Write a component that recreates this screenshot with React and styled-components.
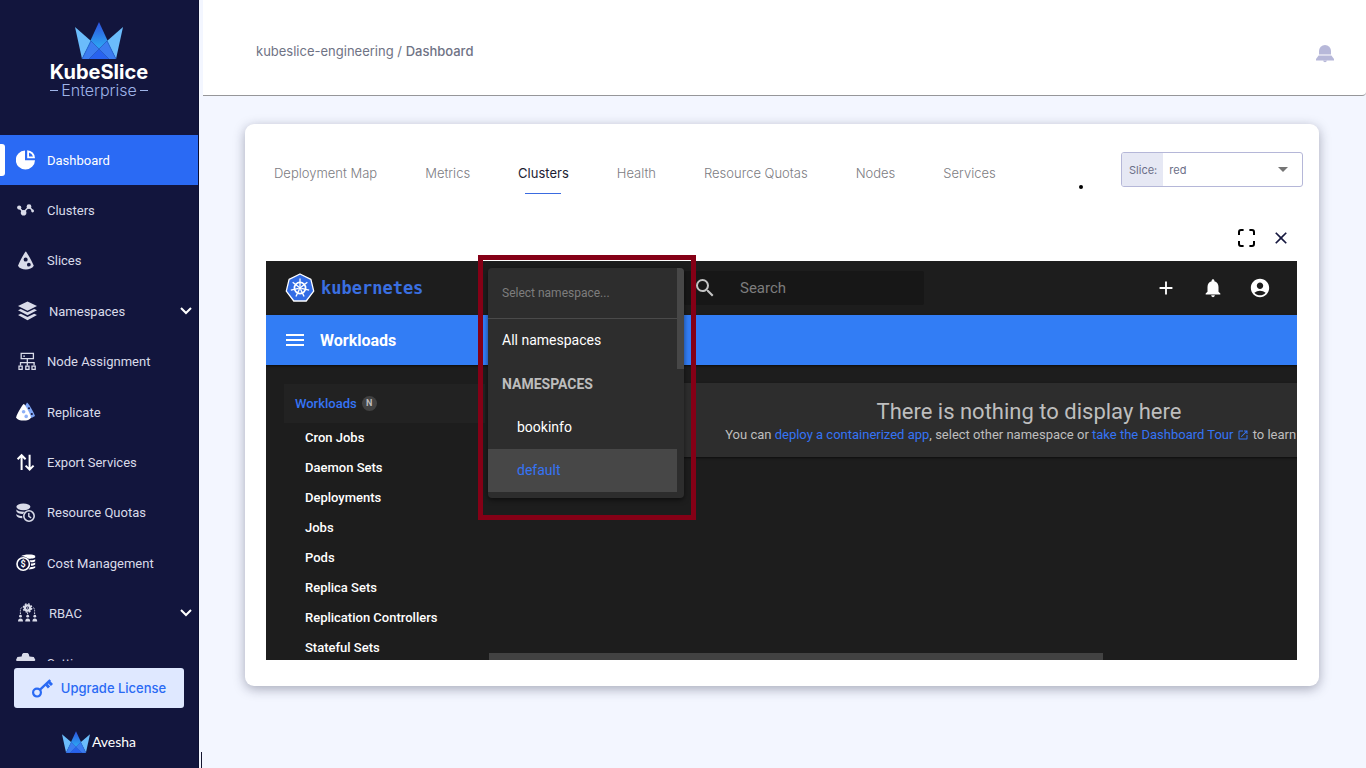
import { useState } from "react";
import styled, { createGlobalStyle } from "styled-components";
import {
    MdAccountCircle,
    MdAdd,
    MdClose,
    MdMenu,
    MdNotifications,
    MdOpenInNew,
    MdSearch,
} from "react-icons/md";

const GlobalStyle = createGlobalStyle`
    * {
        box-sizing: border-box;
    }

    :root {
        --navy: #12153d;
        --blue: #2a6af4;
        --page: #f3f6ff;
        --k8s-bg: #1d1d1d;
        --k8s-card: #2d2d2d;
        --k8s-blue: #327df5;
        --k8s-link: #3574f5;
    }

    body {
        margin: 0;
        background: var(--page);
        font-family: Inter, "Liberation Sans", sans-serif;
        font-size: 13px;
    }

    button, input, select {
        font: inherit;
        color: inherit;
        border: 0;
        padding: 0;
        margin: 0;
        background: none;
        outline: none;
    }

    button {
        cursor: pointer;
    }

    a {
        text-decoration: none;
    }

    ul {
        list-style: none;
        margin: 0;
        padding: 0;
    }

    svg {
        display: block;
        flex: none;
    }
`;

const Shell = styled.div`
    display: flex;
    height: 100vh;
    min-height: 600px;
`;

/* ---------- Sidebar ---------- */

const Sidebar = styled.aside`
    position: relative;
    flex: 0 0 199px;
    display: flex;
    flex-direction: column;
    margin-right: 3px;
    background: var(--navy);
    border-right: 1px solid #0c0f30;

    &::after {
        content: "";
        position: absolute;
        right: -4px;
        bottom: 0;
        width: 1px;
        height: 16px;
        background: #14162f;
    }
`;

const Brand = styled.div`
    display: flex;
    flex-direction: column;
    align-items: center;
    height: 135px;
    flex: none;
    padding-top: 22px;
`;

const BrandName = styled.div`
    margin-top: 3px;
    font-size: 20px;
    font-weight: 700;
    line-height: 20px;
    color: #fff;
`;

const BrandEdition = styled.div`
    display: flex;
    align-items: center;
    gap: 3px;
    font-size: 16px;
    font-weight: 300;
    line-height: 16px;
    color: #9fb4e8;

    &::before,
    &::after {
        content: "";
        width: 8px;
        height: 1px;
        background: #9fb4e8;
    }
`;

const Nav = styled.nav`
    flex: 1;
    min-height: 0;
    overflow: hidden;
    display: flex;
    flex-direction: column;
    gap: 1px;
    font-family: Roboto, sans-serif;
`;

const NavLink = styled.a`
    position: relative;
    display: flex;
    align-items: center;
    gap: 11px;
    height: 50px;
    padding: 0 6px 0 ${({ $expandable }) => ($expandable ? "18px" : "16px")};
    color: ${({ $active }) => ($active ? "#fff" : "#d9dbe9")};
    background: ${({ $active }) => ($active ? "var(--blue)" : "transparent")};

    &::before {
        content: "";
        display: ${({ $active }) => ($active ? "block" : "none")};
        position: absolute;
        left: 0;
        top: 9px;
        bottom: 9px;
        width: 5px;
        border-radius: 0 3px 3px 0;
        background: #fff;
    }
`;

const NavLabel = styled.span`
    flex: 1;
    padding-top: 1px;
`;

const SidebarFooter = styled.div`
    flex: none;
    display: flex;
    flex-direction: column;
    align-items: center;
    padding: 7px 14px 15px;
    gap: 23px;
`;

const UpgradeButton = styled.button`
    display: flex;
    align-items: center;
    justify-content: center;
    gap: 8px;
    width: 100%;
    height: 40px;
    border-radius: 3px;
    background: #dfe8ff;
    color: var(--blue);
    font-weight: 500;
`;

const Avesha = styled.div`
    display: flex;
    align-items: center;
    gap: 2px;
    color: #fff;
    font-family: Lato, sans-serif;
    font-size: 14px;
    line-height: 22px;
`;

/* ---------- Page ---------- */

const Page = styled.div`
    flex: 1;
    min-width: 0;
`;

const Header = styled.header`
    display: flex;
    justify-content: space-between;
    height: 96px;
    margin-left: 1px;
    padding: 41px 32px 0 53px;
    background: #fff;
    border-bottom: 1px solid #969699;
    border-radius: 0 0 4px 0;
`;

const Breadcrumb = styled.div`
    line-height: 20px;
    color: #6f7385;

    a {
        color: inherit;
    }

    strong {
        font-weight: 500;
    }
`;

const BellButton = styled.button`
    align-self: flex-start;
    margin-top: 4px;
`;

const Main = styled.main`
    padding: 28px 47px 0 43px;
`;

const Card = styled.section`
    padding: 28px 16px 26px 21px;
    border-radius: 9px;
    background: #fff;
    box-shadow: 0 3px 12px rgba(30, 34, 60, 0.36);
`;

const CardTop = styled.div`
    display: flex;
    justify-content: space-between;
    align-items: flex-start;
`;

const Tabs = styled.div`
    display: flex;
    gap: 48px;
    padding-left: 8px;
`;

const Tab = styled.button`
    display: flex;
    flex-direction: column;
    align-items: center;
    padding-top: 11px;
    line-height: 20px;
    font-weight: ${({ $active }) => ($active ? 400 : 300)};
    color: ${({ $active }) => ($active ? "#1c1d33" : "#7c7c82")};
    white-space: nowrap;

    &::after {
        content: "";
        width: 36px;
        height: 1px;
        margin-top: 10px;
        background: ${({ $active }) => ($active ? "#3a6be0" : "transparent")};
    }
`;

const Filter = styled.div`
    display: flex;
    align-items: flex-start;
    gap: 38px;
`;

const Dot = styled.span`
    width: 4px;
    height: 4px;
    margin-top: 33px;
    border-radius: 2px;
    background: #000;
`;

const SliceField = styled.label`
    position: relative;
    display: flex;
    align-items: center;
    width: 182px;
    height: 35px;
    border: 1px solid #b5b7d8;
    border-radius: 3px;
    overflow: hidden;
    font-size: 11px;
    color: #6c6f88;

    span {
        display: flex;
        align-items: center;
        align-self: stretch;
        padding: 0 6px 0 7px;
        background: #e6e8f4;
    }

    select {
        flex: 1;
        align-self: stretch;
        padding-left: 6px;
        appearance: none;
    }

    svg {
        position: absolute;
        right: 14px;
        top: 14px;
        pointer-events: none;
    }
`;

const CardTools = styled.div`
    display: flex;
    justify-content: flex-end;
    gap: 11px;
    margin: 32px 10px 11px 0;

    button {
        display: flex;
        align-items: center;
        justify-content: center;
        width: 24px;
        height: 24px;
        color: #16183f;
    }
`;

/* ---------- Kubernetes panel ---------- */

const PanelWrap = styled.div`
    position: relative;
    margin-right: 6px;
    font-family: Roboto, sans-serif;
`;

const Panel = styled.div`
    height: 399px;
    overflow: hidden;
    background: var(--k8s-bg);
    color: #fff;
    display: flex;
    flex-direction: column;
`;

const TopBar = styled.div`
    display: flex;
    align-items: center;
    flex: 0 0 54px;
    padding-right: 26px;
`;

const K8sBrand = styled.div`
    display: flex;
    align-items: center;
    gap: 6px;
    flex: 0 0 418px;
    padding-left: 19px;
    color: #3a6fe0;
    font-family: "DejaVu Sans Mono", monospace;
    font-size: 17px;
    font-weight: 700;
`;

const SearchBox = styled.label`
    display: flex;
    align-items: center;
    gap: 23px;
    flex: 0 1 240px;
    min-width: 0;
    height: 34px;
    padding-left: 9px;
    border-radius: 2px;
    background: #171717;
    color: #c4c4c4;

    input {
        min-width: 0;
        flex: 1;
        font-size: 15px;
    }

    input::placeholder {
        color: #7d7d7d;
        opacity: 1;
    }
`;

const TopActions = styled.div`
    display: flex;
    gap: 25px;
    margin-left: auto;
`;

const ActionBar = styled.div`
    display: flex;
    align-items: center;
    gap: 13px;
    flex: 0 0 50px;
    padding-left: 17px;
    background: var(--k8s-blue);
    box-shadow: 0 1px 2px rgba(0, 0, 0, 0.6);
    font-size: 16px;
    font-weight: 700;
`;

const PanelBody = styled.div`
    display: flex;
    flex: 1;
    min-height: 0;
`;

const SideNav = styled.nav`
    flex: 0 0 223px;
    padding: 19px 4px 0 18px;
    overflow: hidden;
    font-weight: 500;
`;

const SideTitle = styled.a`
    display: flex;
    align-items: center;
    gap: 5px;
    height: 39px;
    padding-left: 11px;
    background: #222;
    color: var(--k8s-link);

    span {
        width: 15px;
        height: 15px;
        border-radius: 50%;
        background: #424242;
        color: #bdbdbd;
        font-size: 9px;
        font-weight: 700;
        line-height: 15px;
        text-align: center;
    }
`;

const SideItem = styled.a`
    display: block;
    padding-left: 21px;
    color: #fff;
    line-height: 30px;
`;

const Content = styled.div`
    position: relative;
    flex: 1;
    min-width: 0;
    overflow: hidden;
    padding: 18px 0 0 18px;
`;

const EmptyCard = styled.div`
    width: 1044px;
    height: 74px;
    padding-top: 15px;
    background: var(--k8s-card);
    box-shadow: 0 1px 2px rgba(0, 0, 0, 0.6);
    color: #bebebe;
    text-align: center;
    line-height: 18px;

    h2 {
        margin: 0;
        font-size: 22px;
        font-weight: 400;
        line-height: 28px;
    }

    p {
        margin: 0;
    }

    a {
        color: var(--k8s-link);
    }

    svg {
        display: inline-block;
        vertical-align: -2px;
        margin-left: 4px;
    }
`;

const HorizontalThumb = styled.div`
    position: absolute;
    left: 0;
    bottom: 0;
    width: 76%;
    height: 7px;
    background: #424242;
`;

const Highlight = styled.div`
    position: absolute;
    left: 212px;
    top: -6px;
    width: 218px;
    height: 265px;
    padding: 8px 7px 0 5px;
    border: 5px solid #850016;
`;

const Dropdown = styled.div`
    position: relative;
    height: 230px;
    padding-right: 7px;
    border-radius: 4px;
    overflow: hidden;
    background: var(--k8s-card);
    box-shadow: 0 2px 5px rgba(0, 0, 0, 0.5);
    color: #fff;
    font-size: 14px;

    &::after {
        content: "";
        position: absolute;
        top: 0;
        right: 0;
        width: 7px;
        height: 101px;
        background: #474747;
    }
`;

const NamespaceSearch = styled.input`
    display: block;
    width: 100%;
    height: 51px;
    padding: 0 14px;
    border-bottom: 1px solid #4a4a4a;
    font-size: 12px;

    &::placeholder {
        color: #7d7d7d;
        opacity: 1;
    }
`;

const Option = styled.button`
    display: flex;
    align-items: center;
    width: 100%;
    height: 43px;
    padding: 0 0 2px ${({ $inner }) => ($inner ? "29px" : "14px")};
    background: ${({ $selected }) => ($selected ? "#474747" : "transparent")};
    color: ${({ $selected }) => ($selected ? "var(--k8s-link)" : "#fff")};
`;

const OptionGroup = styled.div`
    margin-top: 1px;
    padding-left: 14px;
    color: #bdbdbd;
    font-weight: 700;
    line-height: 43px;
`;

/* ---------- Drawings ---------- */

const Crown = ({ id, width, height }) => (
    <svg width={width} height={height} viewBox="0 0 48 37" aria-hidden="true">
        <defs>
            <linearGradient id={id} x1="0" y1="0" x2="0" y2="1">
                <stop offset="0" stopColor="#2c50dd" />
                <stop offset="0.65" stopColor="#2da2f2" />
                <stop offset="1" stopColor="#2f6cf2" />
            </linearGradient>
        </defs>
        <path d="M0 5 16 19 7 37Z" fill="#6bbcfb" />
        <path d="M48 5 32 19 41 37Z" fill="#6bbcfb" />
        <path d="M24 0 41 37H7Z" fill={`url(#${id})`} />
        <path d="M16 19 24 27 14 37H7ZM32 19 24 27 34 37H41Z" fill="#3b7cf0" />
        <path d="M24 27 34 37H14Z" fill="#2862ee" />
        <path d="M16 19 34 37M32 19 14 37M16 19 7 37M32 19 41 37" stroke="#2450b5" strokeWidth="0.6" fill="none" />
    </svg>
);

const Icon = ({ children }) => (
    <svg width="20" height="20" viewBox="0 0 20 20" fill="#d9dbe9" aria-hidden="true">
        {children}
    </svg>
);

const DashboardIcon = () => (
    <Icon>
        <path d="M9 0.4V10.2H19A9.6 9.6 0 1 1 9 0.4Z" fill="#fff" />
        <path d="M11.2 0.2A8 8 0 0 1 19 8.2H11.2ZM13 2.4V6.4H17A6 6 0 0 0 13 2.4Z" fill="#fff" fillRule="evenodd" />
    </Icon>
);

const ClustersIcon = () => (
    <Icon>
        <path d="M3 7.5 7.5 12.5 13 6.5 16.5 10.5" fill="none" stroke="#d9dbe9" strokeWidth="1.5" />
        <circle cx="3.2" cy="7.6" r="2.1" />
        <circle cx="7.6" cy="12.8" r="2.8" />
        <circle cx="13" cy="6.7" r="2.4" />
        <circle cx="16.6" cy="11" r="1.4" />
    </Icon>
);

const SlicesIcon = () => (
    <Icon>
        <path
            d="M9.8 1.6C10.4 1.6 15.4 10 17.8 15.8 16.4 18.4 13 19.4 9.8 19.4S3.2 18.4 2 15.8C4.2 10 9.2 1.6 9.8 1.6ZM9.6 7.6A2 2 0 1 0 9.7 11.6 2 2 0 0 0 9.6 7.6ZM12.8 12.8A1.9 1.9 0 1 0 12.9 16.6 1.9 1.9 0 0 0 12.8 12.8Z"
            fillRule="evenodd"
        />
    </Icon>
);

const LayersIcon = () => (
    <Icon>
        <path d="M9.5 0.5 19 5 9.5 9.8 0 5Z" />
        <path d="M0 9.2 2.8 7.9 9.5 11.3 16.2 7.9 19 9.2 9.5 14.2ZM0 14 2.8 12.7 9.5 16.1 16.2 12.7 19 14 9.5 19.2Z" />
    </Icon>
);

const NodeIcon = () => (
    <Icon>
        <g fill="none" stroke="#d9dbe9" strokeWidth="1.3">
            <path d="M5.2 2.4H17.4V7.6H5.2ZM11.3 7.6V14.6M4.5 14.6V11.6H18.1V14.6" />
            <path d="M3 15.2H6.2V18.4H3ZM9.8 15.2H13V18.4H9.8ZM16 15.2H19.2V18.4H16Z" />
        </g>
        <path d="M7.2 4.4H9V5.8H7.2Z" />
    </Icon>
);

const ReplicateIcon = () => (
    <Icon>
        <path d="M11 0.5C13 2 17.5 9.5 19 14L15.5 16 9 4Z" fill="#7ea5f5" />
        <circle cx="13" cy="6.3" r="1" fill="#12153d" />
        <circle cx="15.8" cy="12" r="1.1" fill="#12153d" />
        <path d="M7.8 2C8.6 2 13.5 10 15.2 15.4 13.8 17.8 11 18.6 7.6 18.6S1.4 17.6 0 15.4C1.8 10 7 2 7.8 2Z" fill="#fff" />
        <circle cx="7.6" cy="9.8" r="1.8" fill="#8fb1f7" />
        <circle cx="10.2" cy="14.4" r="1.8" fill="#8fb1f7" />
    </Icon>
);

const ExportIcon = () => (
    <Icon>
        <path d="M5.6 18V3.4M1.6 7.2 5.6 3.2 9.6 7.2M13.6 2.8V17.4M9.6 13.6 13.6 17.6 17.6 13.6" fill="none" stroke="#fff" strokeWidth="2" />
    </Icon>
);

const QuotasIcon = () => (
    <Icon>
        <ellipse cx="7.4" cy="4.8" rx="7" ry="3.4" />
        <path d="M0.4 7.6C2 9.4 4.5 9.8 8.6 9.7L6.8 12C3.5 12 0.8 10.8 0.4 9.2ZM0.4 11.9C1.8 13.4 3.8 13.9 6.2 14L6.4 16.2C3.2 16 0.8 15 0.4 13.4Z" />
        <circle cx="13" cy="14" r="5.2" fill="none" stroke="#d9dbe9" strokeWidth="1.6" />
        <path d="M12.8 11V14.4L15.2 15.8" fill="none" stroke="#d9dbe9" strokeWidth="1.4" />
    </Icon>
);

const CostIcon = () => (
    <Icon>
        <path d="M5 3.2C7 1.2 17 0.6 19.2 2.8V4.6C17.4 5.8 14 6 12 5.6 10 3.8 7.4 3.2 5 3.2ZM13.6 7.2C15.8 7.4 18 7 19.2 6.2V8.2C18 9.2 16 9.4 14.6 9.3ZM15 10.6C16.8 10.6 18.4 10.2 19.2 9.6V11.6C18 12.6 16.4 12.8 15 12.8ZM14.6 14C16.6 14 18.4 13.6 19.2 13V14.8C17.6 16.2 15 16.4 12.6 16.4Z" fill="#fff" />
        <circle cx="7.2" cy="11" r="6.2" fill="none" stroke="#fff" strokeWidth="1.6" />
        <text x="7.2" y="14.4" textAnchor="middle" fontSize="9" fontWeight="700" fill="#fff">$</text>
    </Icon>
);

const RbacIcon = () => (
    <Icon>
        <circle cx="9.5" cy="5" r="2.6" fill="none" stroke="#d9dbe9" strokeWidth="2.4" />
        <circle cx="9.5" cy="5" r="4.2" fill="none" stroke="#d9dbe9" strokeWidth="1.4" strokeDasharray="1.8 1.5" />
        <circle cx="9.5" cy="5" r="0.7" />
        <path d="M2.4 11V7.5Q2.4 4.6 4.6 4.4M16.6 11V7.5Q16.6 4.6 14.4 4.4M9.6 9.6V11.6" fill="none" stroke="#d9dbe9" strokeDasharray="1.6 1" />
        <circle cx="2.5" cy="13.2" r="1.4" />
        <circle cx="9.7" cy="13.2" r="1.4" />
        <circle cx="16.8" cy="13.2" r="1.4" />
        <path d="M0 18.6Q0 15.4 2.5 15.4T5 18.6ZM7.2 18.6Q7.2 15.4 9.7 15.4T12.2 18.6ZM14.4 18.6Q14.4 15.4 16.8 15.4T19.2 18.6Z" />
    </Icon>
);

const SettingsIcon = () => (
    <Icon>
        <path d="M7.4 0H11.6Q13 0.4 13.4 3.4L17.8 4 19.4 7 17 10 19.4 13 17 17.2 13.2 16.6 12 20H7L5.8 16.6 2 17.2 0 13 2 10 0 7 1.4 4 5.6 3.4Q6 0.4 7.4 0ZM9.5 8A2.5 2.5 0 1 0 9.6 13 2.5 2.5 0 0 0 9.5 8Z" fillRule="evenodd" />
    </Icon>
);

const KeyIcon = () => (
    <svg width="21" height="19" viewBox="0 0 21 19" fill="none" stroke="#2a6af4" aria-hidden="true">
        <circle cx="5" cy="13.6" r="3.9" strokeWidth="2.2" />
        <path d="M7.8 10.8 18.2 1" strokeWidth="2.4" />
        <path d="M14 5 17 8.4M16.6 2.6 20 6" strokeWidth="3" />
    </svg>
);

const BellIcon = () => (
    <svg width="18" height="18" viewBox="0 0 18 18" fill="#b7b8d9" aria-hidden="true">
        <path d="M3 9.6V6A6 6 0 0 1 15 6V9.6Z" />
        <path d="M2.6 10.4H15.4L18 14V15.4H0V14Z" />
        <path d="M7 15.4H11A2.1 2.6 0 0 1 7 15.4Z" />
    </svg>
);

const ExpandIcon = () => (
    <svg width="17" height="18" viewBox="0 0 17 18" fill="none" stroke="#000" strokeWidth="2" aria-hidden="true">
        <path d="M1 6V3Q1 1 3 1H5.6M11.4 1H14Q16 1 16 3V6M16 12V15Q16 17 14 17H11.4M5.6 17H3Q1 17 1 15V12" />
    </svg>
);

// seven-sided helm: one spoke and one handle per side
const HelmIcon = () => (
    <svg width="30" height="30" viewBox="-15 -15 30 30" aria-hidden="true">
        <path
            d="M0 -14 10.9 -8.7 13.7 3.2 6.2 13H-6.2L-13.7 3.2 -10.9 -8.7Z"
            fill="#326ce5"
            stroke="#fff"
            strokeWidth="1.3"
            strokeLinejoin="round"
        />
        <circle r="5.6" fill="none" stroke="#fff" strokeWidth="1.7" />
        <circle r="1.7" fill="#fff" />
        {[0, 1, 2, 3, 4, 5, 6].map(n => (
            <path key={n} d="M0 -1.5V-9.4" stroke="#fff" strokeWidth="1.3" transform={`rotate(${(n * 360) / 7})`} />
        ))}
    </svg>
);

/* ---------- Data ---------- */

const navGroups = [
    [
        { label: "Dashboard", icon: DashboardIcon, active: true },
        { label: "Clusters", icon: ClustersIcon },
        { label: "Slices", icon: SlicesIcon },
    ],
    [
        { label: "Namespaces", icon: LayersIcon, expandable: true },
        { label: "Node Assignment", icon: NodeIcon },
    ],
    [
        { label: "Replicate", icon: ReplicateIcon },
        { label: "Export Services", icon: ExportIcon },
        { label: "Resource Quotas", icon: QuotasIcon },
    ],
    [
        { label: "Cost Management", icon: CostIcon },
        { label: "RBAC", icon: RbacIcon, expandable: true },
        { label: "Settings", icon: SettingsIcon },
    ],
];

const tabs = ["Deployment Map", "Metrics", "Clusters", "Health", "Resource Quotas", "Nodes", "Services"];

const workloads = [
    "Cron Jobs",
    "Daemon Sets",
    "Deployments",
    "Jobs",
    "Pods",
    "Replica Sets",
    "Replication Controllers",
    "Stateful Sets",
];

const namespaces = ["bookinfo", "default"];

/* ---------- Components ---------- */

const MainSidebar = () => (
    <Sidebar>
        <Brand>
            <Crown id="crown-large" width={48} height={37} />
            <BrandName>KubeSlice</BrandName>
            <BrandEdition>Enterprise</BrandEdition>
        </Brand>
        <Nav>
            {navGroups.map((group, index) => (
                <ul key={index}>
                    {group.map(({ label, icon: ItemIcon, active, expandable }) => (
                        <li key={label}>
                            <NavLink href="#" $active={active} $expandable={expandable}>
                                <ItemIcon />
                                <NavLabel>{label}</NavLabel>
                                {expandable && (
                                    <svg width="12" height="8" viewBox="0 0 12 8" fill="none" stroke="#fff" strokeWidth="2" aria-hidden="true">
                                        <path d="M1 1 6 6 11 1" />
                                    </svg>
                                )}
                            </NavLink>
                        </li>
                    ))}
                </ul>
            ))}
        </Nav>
        <SidebarFooter>
            <UpgradeButton type="button">
                <KeyIcon />
                Upgrade License
            </UpgradeButton>
            <Avesha>
                <Crown id="crown-small" width={28} height={22} />
                Avesha
            </Avesha>
        </SidebarFooter>
    </Sidebar>
);

const NamespacePicker = () => {
    const [selected, setSelected] = useState("default");

    return (
        <Highlight>
            <Dropdown>
                <NamespaceSearch type="text" placeholder="Select namespace..." aria-label="Select namespace" />
                <Option type="button" onClick={() => setSelected("all")} $selected={selected === "all"}>
                    All namespaces
                </Option>
                <OptionGroup>NAMESPACES</OptionGroup>
                {namespaces.map(name => (
                    <Option key={name} type="button" $inner $selected={selected === name} onClick={() => setSelected(name)}>
                        {name}
                    </Option>
                ))}
            </Dropdown>
        </Highlight>
    );
};

const KubernetesPanel = () => (
    <PanelWrap>
        <Panel>
            <TopBar>
                <K8sBrand>
                    <HelmIcon />
                    kubernetes
                </K8sBrand>
                <SearchBox>
                    <MdSearch size={24} />
                    <input type="text" placeholder="Search" aria-label="Search" />
                </SearchBox>
                <TopActions>
                    <button type="button" aria-label="Create"><MdAdd size={22} /></button>
                    <button type="button" aria-label="Notifications"><MdNotifications size={22} /></button>
                    <button type="button" aria-label="Account"><MdAccountCircle size={22} /></button>
                </TopActions>
            </TopBar>
            <ActionBar>
                <button type="button" aria-label="Menu"><MdMenu size={24} /></button>
                Workloads
            </ActionBar>
            <PanelBody>
                <SideNav>
                    <SideTitle href="#">
                        Workloads <span>N</span>
                    </SideTitle>
                    {workloads.map(item => (
                        <SideItem key={item} href="#">{item}</SideItem>
                    ))}
                </SideNav>
                <Content>
                    <EmptyCard>
                        <h2>There is nothing to display here</h2>
                        <p>
                            You can <a href="#">deploy a containerized app</a>, select other namespace or{" "}
                            <a href="#">take the Dashboard Tour<MdOpenInNew size={12} /></a> to learn more.
                        </p>
                    </EmptyCard>
                    <HorizontalThumb />
                </Content>
            </PanelBody>
        </Panel>
        <NamespacePicker />
    </PanelWrap>
);

const App = () => {
    const [activeTab, setActiveTab] = useState("Clusters");

    return (
        <>
            <GlobalStyle />
            <Shell>
                <MainSidebar />
                <Page>
                    <Header>
                        <Breadcrumb>
                            <a href="#">kubeslice-engineering</a> / <strong>Dashboard</strong>
                        </Breadcrumb>
                        <BellButton type="button" aria-label="Notifications"><BellIcon /></BellButton>
                    </Header>
                    <Main>
                        <Card>
                            <CardTop>
                                <Tabs>
                                    {tabs.map(tab => (
                                        <Tab key={tab} type="button" $active={tab === activeTab} onClick={() => setActiveTab(tab)}>
                                            {tab}
                                        </Tab>
                                    ))}
                                </Tabs>
                                <Filter>
                                    <Dot />
                                    <SliceField>
                                        <span>Slice:</span>
                                        <select defaultValue="red">
                                            <option>red</option>
                                        </select>
                                        <svg width="10" height="5" viewBox="0 0 10 5" fill="#757575" aria-hidden="true">
                                            <path d="M0 0H10L5 5Z" />
                                        </svg>
                                    </SliceField>
                                </Filter>
                            </CardTop>
                            <CardTools>
                                <button type="button" aria-label="Full screen"><ExpandIcon /></button>
                                <button type="button" aria-label="Close"><MdClose size={20} /></button>
                            </CardTools>
                            <KubernetesPanel />
                        </Card>
                    </Main>
                </Page>
            </Shell>
        </>
    );
};

export default App;
